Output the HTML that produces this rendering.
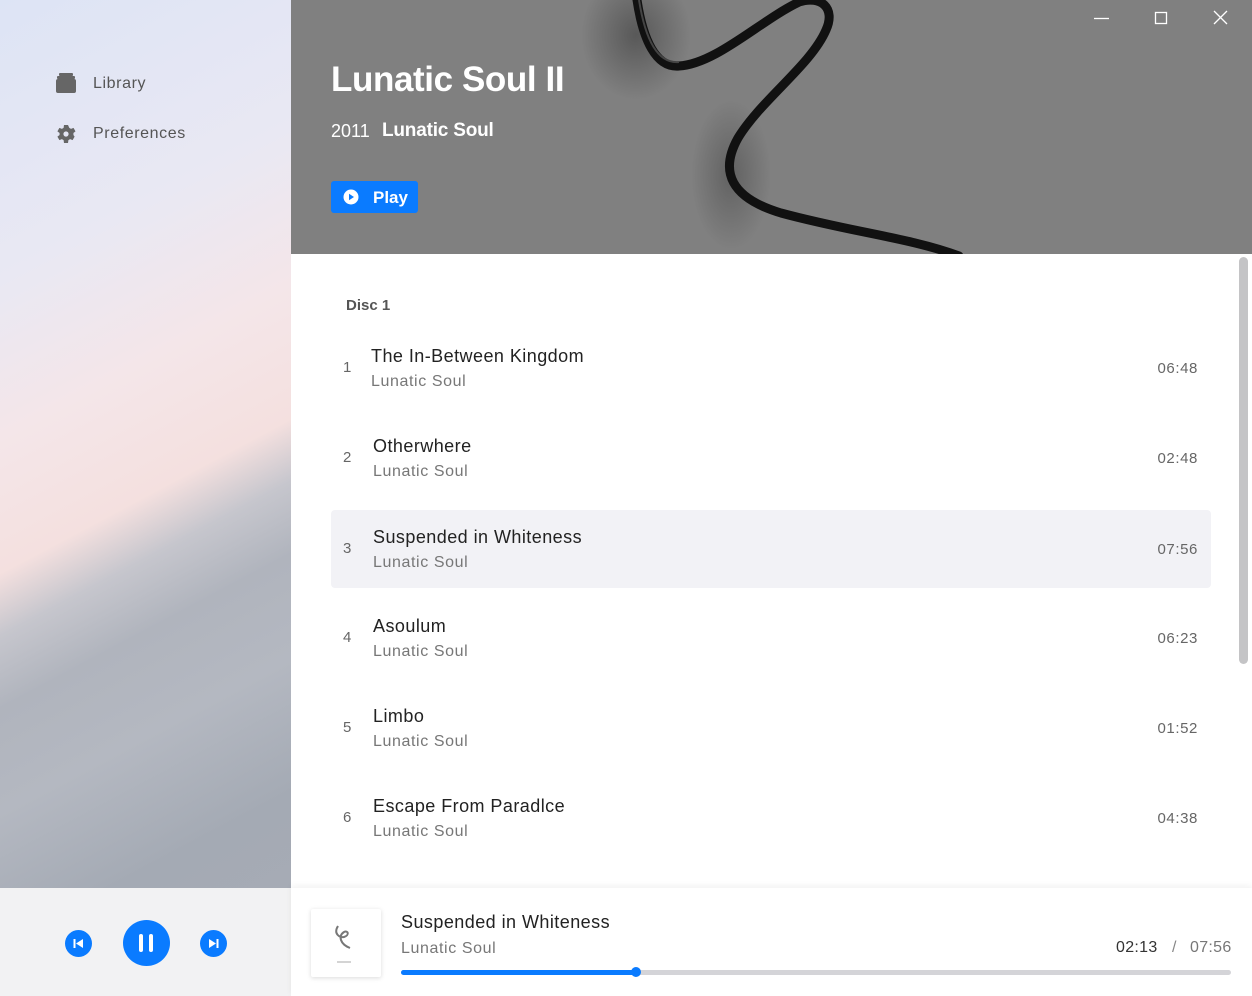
<!DOCTYPE html>
<html><head><meta charset="utf-8"><style>
*{margin:0;padding:0;box-sizing:border-box}
body{width:1252px;height:996px;overflow:hidden;font-family:"Liberation Sans",sans-serif;background:#fff;position:relative}
.side{position:absolute;left:0;top:0;width:291px;height:888px;background:linear-gradient(152deg,#dde4f5 0%,#e9e8f3 27%,#f4e6e9 42%,#f4e0df 55%,#c6c6cd 61%,#b0b4bd 68%,#b4b8c1 78%,#a4aab4 91%,#a6abb5 100%)}
.nav{position:absolute;left:93px;font-size:16px;color:#555;letter-spacing:.6px}
.hdr{position:absolute;left:291px;top:0;width:961px;height:254px;background:#808080;overflow:hidden}
.t{position:absolute;color:#fff;font-weight:bold}
.row{position:absolute;left:331px;width:880px;height:78px}
.row .n{position:absolute;left:12px;top:30px;font-size:15px;color:#666}
.row .ti{position:absolute;left:42px;top:17px;font-size:18px;color:#222;letter-spacing:.45px}
.row .ar{position:absolute;left:42px;top:44px;font-size:16px;color:#777;letter-spacing:.6px}
.row .d{position:absolute;right:13px;top:31px;font-size:15px;color:#666;letter-spacing:.6px}
.bl{position:absolute;left:0;top:888px;width:291px;height:108px;background:#f2f2f3}
.br{position:absolute;left:291px;top:888px;width:961px;height:108px;background:#fff;box-shadow:0 -2px 6px rgba(0,0,0,.06)}
.c{position:absolute;border-radius:50%;background:#0a7bff}
</style></head><body>
<div class="side"></div>
<svg style="position:absolute;left:55px;top:72px" width="22" height="22" viewBox="0 0 22 22"><rect x="4" y="1" width="14" height="3" rx="1" fill="#666"/><rect x="2" y="4" width="18" height="3" rx="1" fill="#666"/><rect x="1" y="7" width="20" height="14" rx="2" fill="#666"/></svg>
<div class="nav" style="top:75px">Library</div>
<svg style="position:absolute;left:54px;top:122px" width="24" height="24" viewBox="0 0 24 24"><path fill="#666" fill-rule="evenodd" d="M19.4 13a7.5 7.5 0 0 0 0-2l2.1-1.6-2-3.5-2.5 1a7.4 7.4 0 0 0-1.7-1L14 3h-4l-.4 2.9a7.4 7.4 0 0 0-1.7 1l-2.5-1-2 3.5L5.6 11a7.5 7.5 0 0 0 0 2l-2.2 1.6 2 3.5 2.5-1a7.4 7.4 0 0 0 1.7 1L10 21h4l.4-2.9a7.4 7.4 0 0 0 1.7-1l2.5 1 2-3.5zM12 14.6a2.6 2.6 0 1 1 0-5.2 2.6 2.6 0 0 1 0 5.2z"/></svg>
<div class="nav" style="top:125px">Preferences</div>

<div class="hdr">
<div style="position:absolute;left:290px;top:-30px;width:110px;height:130px;border-radius:50%;background:radial-gradient(closest-side,rgba(40,40,40,.45),rgba(40,40,40,0))"></div>
<div style="position:absolute;left:400px;top:100px;width:80px;height:150px;border-radius:50%;background:radial-gradient(closest-side,rgba(40,40,40,.35),rgba(40,40,40,0))"></div>
<svg width="961" height="254" style="position:absolute;left:0;top:0">
<path d="M346 0 C352 40 365 68 388 66 C425 64 470 20 508 2 C530 -5 545 8 535 30 C520 65 470 100 447 138 C428 172 440 198 490 213 C560 232 620 238 668 256" stroke="#111" stroke-width="9" fill="none" stroke-linecap="round"/>
<path d="M348 0 C354 38 366 64 388 62" stroke="#444" stroke-width="2" fill="none"/>
</svg>
<div class="t" style="left:40px;top:60px;font-size:35px;letter-spacing:-.4px">Lunatic Soul II</div>
<div class="t" style="left:40px;top:121px;font-size:18px;font-weight:normal">2011</div>
<div class="t" style="left:91px;top:120px;font-size:19px;letter-spacing:-.2px">Lunatic Soul</div>
<div style="position:absolute;left:40px;top:181px;width:87px;height:32px;background:#0a7bff;border-radius:3px"></div>
<svg style="position:absolute;left:52px;top:189px" width="16" height="16"><circle cx="8" cy="8" r="7.5" fill="#fff"/><path d="M6 4.8v6.4L11 8z" fill="#0a7bff"/></svg>
<div class="t" style="left:82px;top:188px;font-size:17px">Play</div>
<svg style="position:absolute;left:800px;top:8px" width="140" height="22" stroke="#fff" stroke-width="1.3" fill="none"><path d="M3 10.5h15"/><rect x="64.5" y="4.5" width="11" height="11"/><path d="M123 3l13 13M136 3l-13 13"/></svg>
</div>

<div style="position:absolute;left:346px;top:297px;font-size:15px;font-weight:bold;color:#555">Disc 1</div>
<div class="row" style="top:329px"><span class="n">1</span><span class="ti" style="left:40px">The In-Between Kingdom</span><span class="ar" style="left:40px">Lunatic Soul</span><span class="d">06:48</span></div>
<div class="row" style="top:419px"><span class="n">2</span><span class="ti">Otherwhere</span><span class="ar">Lunatic Soul</span><span class="d">02:48</span></div>
<div class="row" style="top:510px;background:#f2f2f6;border-radius:4px"><span class="n">3</span><span class="ti">Suspended in Whiteness</span><span class="ar">Lunatic Soul</span><span class="d">07:56</span></div>
<div class="row" style="top:599px"><span class="n">4</span><span class="ti">Asoulum</span><span class="ar">Lunatic Soul</span><span class="d">06:23</span></div>
<div class="row" style="top:689px"><span class="n">5</span><span class="ti">Limbo</span><span class="ar">Lunatic Soul</span><span class="d">01:52</span></div>
<div class="row" style="top:779px"><span class="n">6</span><span class="ti">Escape From Paradlce</span><span class="ar">Lunatic Soul</span><span class="d">04:38</span></div>
<div style="position:absolute;left:1239px;top:257px;width:9px;height:407px;background:#c4c4c6;border-radius:5px"></div>

<div class="bl"></div>
<div class="c" style="left:65px;top:930px;width:27px;height:27px"></div>
<svg style="position:absolute;left:65px;top:930px" width="27" height="27"><rect x="8.5" y="9" width="2" height="9" fill="#fff"/><path d="M18 9v9l-7-4.5z" fill="#fff"/></svg>
<div class="c" style="left:123px;top:920px;width:47px;height:46px"></div>
<div style="position:absolute;left:139px;top:934px;width:4px;height:18px;background:#fff;border-radius:2px"></div>
<div style="position:absolute;left:149px;top:934px;width:4px;height:18px;background:#fff;border-radius:2px"></div>
<div class="c" style="left:200px;top:930px;width:27px;height:27px"></div>
<svg style="position:absolute;left:200px;top:930px" width="27" height="27"><rect x="16.5" y="9" width="2" height="9" fill="#fff"/><path d="M9 9v9l7-4.5z" fill="#fff"/></svg>

<div class="br"></div>
<div style="position:absolute;left:311px;top:909px;width:70px;height:68px;background:#fff;box-shadow:0 1px 5px rgba(0,0,0,.15);border-radius:2px"></div>
<svg style="position:absolute;left:330px;top:920px" width="34" height="44"><path d="M8 6 C3 14 10 18 14 17 C20 15 18 10 14 12 C8 16 10 24 20 28" stroke="#777" stroke-width="2" fill="none"/><path d="M7 42h14" stroke="#aaa" stroke-width="1"/></svg>
<div style="position:absolute;left:401px;top:912px;font-size:18px;color:#222;letter-spacing:.45px">Suspended in Whiteness</div>
<div style="position:absolute;left:401px;top:940px;font-size:16px;color:#777;letter-spacing:.6px">Lunatic Soul</div>
<div style="position:absolute;left:1116px;top:939px;font-size:16px;color:#333;letter-spacing:.3px">02:13</div>
<div style="position:absolute;left:1172px;top:939px;font-size:16px;color:#888">/</div>
<div style="position:absolute;left:1190px;top:939px;font-size:16px;color:#777;letter-spacing:.3px">07:56</div>
<div style="position:absolute;left:401px;top:970px;width:830px;height:5px;background:#d4d4d8;border-radius:3px"></div>
<div style="position:absolute;left:401px;top:970px;width:235px;height:5px;background:#0a7bff;border-radius:3px"></div>
<div class="c" style="left:631px;top:967px;width:10px;height:10px"></div>
</body></html>
